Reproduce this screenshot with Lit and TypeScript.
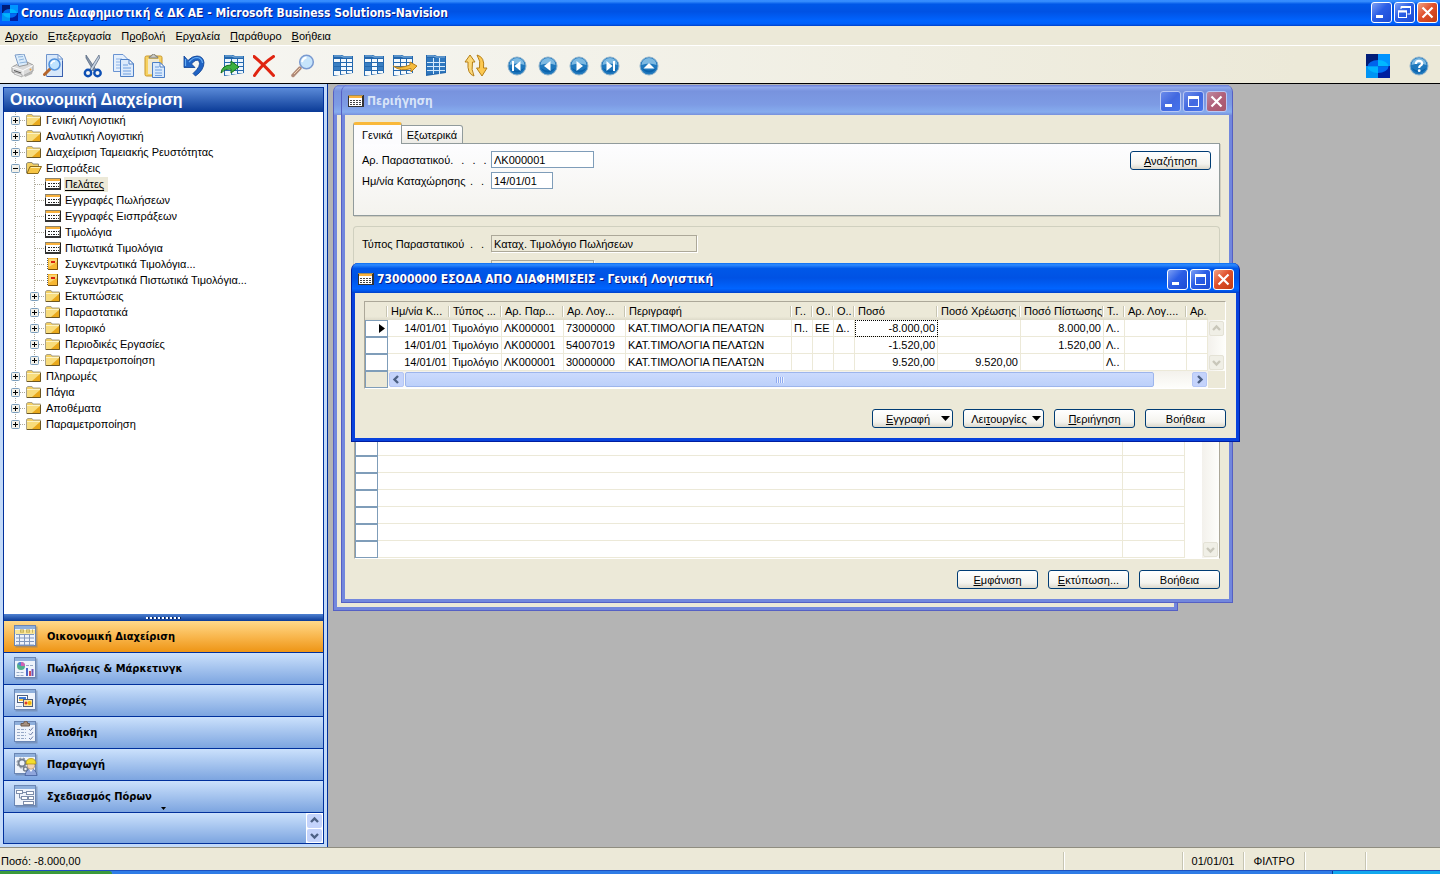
import { LitElement, html, svg, css, nothing, TemplateResult } from "lit";
import { customElement, property } from "lit/decorators.js";
import { classMap } from "lit/directives/class-map.js";

/* ---------- icons ---------- */

const icon = (w: number, h: number, body: unknown) =>
  html`<svg width=${w} height=${h} viewBox="0 0 ${w} ${h}" aria-hidden="true">${body}</svg>`;

const logo = (size: number) => html`
  <svg width=${size} height=${size} viewBox="0 0 24 24" aria-hidden="true">
    <rect width="12" height="12" fill="#001c78"/><rect x="12" width="12" height="12" fill="#0094ff"/>
    <rect y="12" width="12" height="12" fill="#0094f4"/><rect x="12" y="12" width="12" height="12" fill="#0020a0"/>
    <path d="M12 6A10.500 6.500 0 0 0 1.500 12.500H12Z" fill="#0064ec"/><path d="M12 6A10.500 6.500 0 0 1 22.500 12.500H12Z" fill="#00b8ff"/>
    <path d="M1.500 12.500A10.500 6.500 0 0 0 12 19V12.500Z" fill="#00b4ff"/><path d="M12 19A10.500 6.500 0 0 0 22.500 12.500H12Z" fill="#006cf4"/>
  </svg>`;

const folder = icon(16, 12, svg`
  <path d="M.5 11.500V1.500L2 .5H6L7 2H14.500V11.500Z" fill="#f3cf62" stroke="#a8a18a"/>
  <path d="M1 11V3H14V11Z" fill="#f8dc7c"/><path d="M1 3.500H14" stroke="#fdf3c4"/>
  <path d="M6 11L14 4V11Z" fill="#e9a91c"/><path d="M1 11.500H14.500V3" fill="none" stroke="#6b5623"/>`);

const folderOpen = icon(16, 12, svg`
  <path d="M.5 11V1.500L2 .5H6L7 2H12.500V5" fill="#f3cf62" stroke="#8d8a78"/>
  <path d="M1 11.500L4 4.500H15.500L12 11.500Z" fill="#f6c444" stroke="#8a6a1c"/>
  <path d="M5 5.500H14" stroke="#fdf0b0"/>`);

const listIcon = icon(16, 12, svg`
  <rect x=".5" y=".5" width="14" height="10" fill="#fff" stroke="#8e8b82"/>
  <rect x="0" y="0" width="16" height="1" fill="#8e8468"/><rect x="1" y="1" width="14" height="2" fill="#f9b13c"/><rect x="1" y="3" width="14" height="1" fill="#fff"/>
  <rect x="0" y="4" width="1" height="8" fill="#222"/><rect x="15" y="1" width="1" height="11" fill="#222"/><rect x="0" y="10" width="16" height="2" fill="#333"/>
  <path d="M3 5.500H14M3 8.500H14" stroke="#222" stroke-dasharray="2 1 1 1"/>`);

const report = icon(16, 12, svg`
  <rect x="3" y="0" width="10" height="12" fill="#f6b632"/><path d="M12.500 0V11.500H3" fill="none" stroke="#7a4f0c"/>
  <path d="M4 1H12V4L4 9Z" fill="#fbd672"/><rect x="6" y="3" width="4" height="2" fill="#d8230c"/>
  <path d="M2.500 0V12" stroke="#555" stroke-dasharray="1 1"/>`);

const printer = icon(24, 24, svg`
  <path d="M4 1L13 0L17 11L8 13Z" fill="#d9ebfb" stroke="#7c9cc8"/><path d="M7 3L12 2.500M8 6L13 5M8.500 9L15 8" stroke="#8fb5dd"/>
  <path d="M1 13L6 10.500L8 12.500L17 10.500L16 8L22 11V17L12 22L1 18Z" fill="#dadada" stroke="#9a9a9a"/>
  <path d="M1 13L12 16.500L22 11.500M12 16.500V22" fill="none" stroke="#fff"/><path d="M3 16.500L10 19" stroke="#5a5a5a" stroke-width="1.200"/>
  <path d="M3 18L11 20.500V23L3 20Z" fill="#eee" stroke="#9a9a9a" stroke-width=".7"/>
  <path d="M13 21L22 17L21 20L14 23Z" fill="#b5b5b5"/><circle cx="19.500" cy="15.500" r="1" fill="#e8a040"/>`);

const preview = icon(22, 24, svg`
  <path d="M3.500 .5H15L19.500 5V22.500H3.500Z" fill="#d8e8fa" stroke="#6f94cc"/><path d="M15 .5V5H19.500Z" fill="#fff" stroke="#6f94cc"/>
  <path d="M4 22.500H20M19.500 7V22" stroke="#3a5fae"/><path d="M7 15L1.500 20.500" stroke="#b5652a" stroke-width="3" stroke-linecap="round"/>
  <circle cx="11.500" cy="10.500" r="5.500" fill="#bfe4ff" stroke="#4d8fdc" stroke-width="1.500"/><path d="M8 10Q9 7 12 7" fill="none" stroke="#fff" stroke-width="1.500"/>`);

const scissors = icon(20, 24, svg`
  <path d="M3 1L12.500 15L10.500 17L3 4Z" fill="#8796a8" stroke="#4c5f7a" stroke-width=".7"/>
  <path d="M16 1L7 15L9 17L16.500 4Z" fill="#c6d2e0" stroke="#4c5f7a" stroke-width=".7"/>
  <circle cx="5" cy="19" r="3.200" fill="none" stroke="#0d4fb4" stroke-width="2.400"/><circle cx="14.500" cy="19" r="3.200" fill="none" stroke="#0d4fb4" stroke-width="2.400"/>`);

const copy = icon(22, 24, svg`
  <path d="M.5 .5H10L14.500 5V17.500H.5Z" fill="#e4effc" stroke="#6a94d2"/><path d="M3 5H9M3 8H11M3 11H11M3 14H11" stroke="#8db4e8"/>
  <path d="M7.500 5.500H16L20.500 10V22.500H7.500Z" fill="#dceafb" stroke="#4d7fc6"/><path d="M16 5.500V10H20.500Z" fill="#fff" stroke="#4d7fc6"/>
  <path d="M10 11H15M10 14H18M10 17H18M10 20H18" stroke="#6f9fe0"/>`);

const paste = icon(22, 24, svg`
  <rect x="1" y="2" width="17" height="20" rx="1.500" fill="#f7d262" stroke="#c8962a"/><rect x="4" y="5" width="11" height="15" fill="#f2ead0"/>
  <path d="M5 4Q5 2 7.500 2Q8 0 9.500 0Q11 0 11.500 2Q14 2 14 4Z" fill="#c9c9c4" stroke="#7f7d72"/>
  <path d="M8.500 8.500H16L20.500 13V23.500H8.500Z" fill="#d8e9fc" stroke="#4d7fc6"/><path d="M16 8.500V13H20.500Z" fill="#fff" stroke="#4d7fc6"/>
  <path d="M11 13H15M11 16H18M11 19H18M11 21.500H18" stroke="#6f9fe0"/>`);

const undo = icon(22, 22, svg`
  <path d="M1 1V12.500H12L8.500 9Q13 3.500 16 6Q18.500 11 10 18.500L12.500 21Q21 15 21 7.500Q20 1 14 1Q9 1 5 5.500Z" fill="#1f63c4" stroke="#0a3d92" stroke-width=".8"/>
  <path d="M2.500 4V11M6 7Q10 2.500 14 2.500Q19 3 19.500 8" fill="none" stroke="#69aef2" stroke-width="1.200"/>`);

/* Spreadsheet glyph: a tilted frame with three columns of four cells. */
const sheetBase = svg`
  <path d="M0 1H9L11 2H20V19L0 22Z" fill="#2468ae"/><path d="M1 2H8L10 3H19" fill="none" stroke="#8fbce4"/>`;
const cells = (fill: (r: number, c: number) => string) =>
  [0, 1, 2, 3].map((r) => [0, 1, 2].map((c) => svg`<path d="M${1 + c * 6 + (c ? 1 : 0)} ${5 + r * 4}h${c ? 5 : 6}v${r === 3 ? 4 - c : 3}h-${c ? 5 : 6}z" fill=${fill(r, c)}/>`));

const tableInsert = icon(26, 24, svg`<g transform="translate(4 0)">${sheetBase}${cells(() => "#edf5fc")}</g>
  <path d="M1 19Q2 11 11 11V7L19 13L11 19V15Q5 14 1 19Z" fill="#3cb040" stroke="#146e1c"/>`);
const remove = icon(22, 22, svg`
  <path d="M1 1.500Q10 9 20.500 20.500M20.500 1.500Q9 9 1.500 20.500" fill="none" stroke="#e02410" stroke-width="3" stroke-linecap="round"/>`);
const magnifier = icon(24, 24, svg`
  <path d="M9 14L2 21.500" stroke="#b08a78" stroke-width="3.500" stroke-linecap="round"/><path d="M9 14L3 20" stroke="#f0d2b0"/>
  <circle cx="15.500" cy="8" r="6.800" fill="#c6e4fb" stroke="#7a9ad0" stroke-width="1.500"/><path d="M11 8Q12 4 15.500 3.500" fill="none" stroke="#fff" stroke-width="2"/>`);
const tableLeft = icon(22, 24, svg`${sheetBase}${cells((r, c) => (c === 0 && r > 0 && r < 3 ? "#3a7fc2" : "#f4f9fd"))}`);
const tableMid = icon(22, 24, svg`${sheetBase}${cells((r, c) => (r === 1 || r === 2 ? (c === 1 ? "#f4f9fd" : "#3a7fc2") : "#f4f9fd"))}`);
const tableArrow = icon(25, 24, svg`${sheetBase}${cells(() => "#f4f9fd")}
  <path d="M0 12Q6 15 17 11V8L24 12L18 18V14.500Q8 18 0 12Z" fill="#f6bc3c" stroke="#b9801a"/>`);
const tableBlue = icon(22, 24, svg`${sheetBase}<path d="M1 4H19V18L1 20Z" fill="#2f78bf"/><path d="M7.500 4V20M13.500 4V20M1 8.500H19M1 12.500H19M1 16.500H19" stroke="#d6eafb"/>`);
const refresh = icon(24, 24, svg`
  <path d="M1 8L6 1L11 8H8.500Q7 16 10 22Q3 20 4 8Z" fill="#fcd878" stroke="#b57f16"/>
  <path d="M13 1Q21 3 19.500 14H23L18 22L12.500 14H15.500Q17 7 13 1Z" fill="#fcc850" stroke="#b57f16"/>`);

const round = (glyph: unknown) => html`
  <svg width="20" height="20" viewBox="0 0 20 20" aria-hidden="true">
    <circle cx="10" cy="10" r="9" fill="#1f78bd" stroke="#8fb2cc"/>
    <path d="M2.500 9A7.500 7 0 0 1 17.500 9Q10 6 2.500 9Z" fill="#7db9e2"/><path d="M3 12A7.500 7 0 0 0 17 12Q10 17 3 12Z" fill="#0a62ab"/>${glyph}
  </svg>`;
const navFirst = round(svg`<path d="M6 5V15" stroke="#fff" stroke-width="2"/><path d="M13.500 5V15L7.500 10Z" fill="#fff"/>`);
const navPrev = round(svg`<path d="M12.500 5V15L6 10Z" fill="#fff"/>`);
const navNext = round(svg`<path d="M7.500 5V15L14 10Z" fill="#fff"/>`);
const navLast = round(svg`<path d="M14 5V15" stroke="#fff" stroke-width="2"/><path d="M6.500 5V15L12.500 10Z" fill="#fff"/>`);
const navUp = round(svg`<path d="M4.500 12.500H15.500L10 7Z" fill="#fff"/>`);
const help = round(svg`<path d="M6.800 8Q7 4.800 10 4.800Q13.200 4.800 13.200 7.500Q13 9 11 10Q10.200 10.500 10.200 12" fill="none" stroke="#fff" stroke-width="2.200"/><circle cx="10.200" cy="14.700" r="1.400" fill="#fff"/>`);

const card = svg`<rect x="1.500" y="1.500" width="22" height="21" fill="#5f708e" opacity=".45"/>
  <rect x=".5" y=".5" width="21" height="20" fill="#eef3fb" stroke="#6a86b4"/><rect x="1" y="1" width="20" height="3" fill="#8fb0dc"/>`;
const grid9 = icon(24, 23, svg`${card}<rect x="1" y="5" width="20" height="4" fill="#fbe79a"/>
  <path d="M6 6H19" stroke="#b79d3c" stroke-width="3" stroke-dasharray="4 2"/><path d="M6.500 6H19" stroke="#fff6b8" stroke-dasharray="3 3"/>
  <path d="M2 9.500H20M2 13H20M2 16.500H20M2 20H20M5.500 9V20M10.500 9V20M15.500 9V20" stroke="#8298bd"/>`);
const chart = icon(24, 23, svg`${card}<circle cx="7" cy="9" r="4" fill="#52b08c"/><path d="M7 9V5A4 4 0 0 1 11 9Z" fill="#d35fb4"/><path d="M7 9L3.500 7A4 4 0 0 1 7 5Z" fill="#4f7fd6"/>
  <path d="M12 8.500H19M2.500 15.500H10M2.500 18.500H10" stroke="#97a9c6" stroke-dasharray="3 1"/><path d="M13 19V11" stroke="#4a68c8" stroke-width="2"/><path d="M16 19V14" stroke="#d04c5c" stroke-width="2"/><path d="M18.500 19V12" stroke="#6b58b8" stroke-width="2"/>`);
const cardsIcon = icon(24, 23, svg`${card}<rect x="3.500" y="6.500" width="10" height="7" fill="#fff" stroke="#4d5f80"/><rect x="5" y="8" width="7" height="2" fill="#3c78d8"/><rect x="5" y="10" width="7" height="2" fill="#f6c63c"/>
  <rect x="9.500" y="10.500" width="9" height="7" fill="#ffe69a" stroke="#4d5f80"/><circle cx="12" cy="14" r="1.500" fill="#e0382c"/><circle cx="15.500" cy="14" r="2" fill="#f0b400"/><path d="M2 17.500H8" stroke="#97a9c6"/>`);
const checklist = icon(24, 23, svg`${card}<path d="M7 5V2.500H9.500Q10 0 12 0Q14 .5 13.500 2.500H15.500V5Z" fill="#a8917f" stroke="#6c5a4d"/>
  <path d="M3 8.500H12M3 11.500H12M3 14.500H12M3 17.500H12" stroke="#97a9c6" stroke-dasharray="3 1"/><path d="M15 8L16.500 9.500L19 6.500M15 12.500L16.500 14L19 11M15 17L16.500 18.500L19 15.500" fill="none" stroke="#6d7ea8"/>`);
const worker = icon(24, 23, svg`${card}<circle cx="8" cy="10" r="3.500" fill="none" stroke="#76808e" stroke-width="2"/><circle cx="8" cy="10" r="5" fill="none" stroke="#76808e" stroke-dasharray="2 2"/><circle cx="11.500" cy="16" r="2" fill="none" stroke="#76808e" stroke-width="1.500"/>
  <path d="M11 22.500Q12 16 17 16Q22 16 23 22.500Z" fill="#8fa6dc" stroke="#3b5798" stroke-width=".7"/><path d="M15 16L17 19L19 16Z" fill="#fff"/><circle cx="17" cy="12.500" r="3.800" fill="#f3d3b0" stroke="#8a6a50" stroke-width=".5"/><path d="M12 11Q12 5.500 17 5.500Q22 5.500 22 11Z" fill="#f4dd2c" stroke="#a98a10" stroke-width=".7"/>`);
const flowIcon = icon(24, 23, svg`${card}<rect x="2.500" y="5.500" width="6" height="3" fill="#fff" stroke="#7d8daa"/><rect x="12.500" y="6.500" width="7" height="3" fill="#fff" stroke="#7d8daa"/>
  <rect x="7.500" y="11.500" width="6" height="3" fill="#fff" stroke="#7d8daa"/><rect x="14.500" y="11.500" width="5" height="3" fill="#fff" stroke="#7d8daa"/><rect x="9.500" y="16.500" width="10" height="3" fill="#fff" stroke="#7d8daa"/><path d="M5.500 9V13H7.500M8.500 7.500H12" fill="none" stroke="#7d8daa"/>`);

const chevron = (dir: "up" | "down" | "left" | "right") => {
  const d = { up: "M2 7L5.500 3.500L9 7", down: "M2 4L5.500 7.500L9 4", left: "M7 2L3.500 5.500L7 9", right: "M4 2L7.500 5.500L4 9" }[dir];
  return icon(11, 11, svg`<path d=${d} fill="none" stroke="currentColor" stroke-width="2.400"/>`);
};

/* ---------- shared styles ---------- */

const base = css`
  * { box-sizing: border-box; }
  button, input { font: inherit; color: inherit; }
  svg { display: block; flex: none; }
  u { text-underline-offset: 1px; }
`;

/** Splits "_" before the access key and underlines the letter after it. */
const keyed = (text: string) => {
  const i = text.indexOf("_");
  return i < 0 ? text : html`<span>${text.slice(0, i)}<u>${text[i + 1]}</u>${text.slice(i + 2)}</span>`;
};

@customElement("caption-buttons")
class CaptionButtons extends LitElement {
  @property({ type: Boolean }) restore = false;
  @property({ type: Boolean }) dim = false;
  static styles = [base, css`
    :host { display: flex; }
    button { width: 21px; height: 21px; padding: 0; border: 1px solid #fff; border-radius: 3px; display: grid; place-items: center;
      background: linear-gradient(135deg, #7ea0f4, #2b5ee6 45%, #1c4bd4); }
    .close { background: linear-gradient(135deg, #f0a284, #e0502c 45%, #c23c12); }
    .dim button { border-color: #b9c8f4; background: linear-gradient(135deg, #6b8bea, #4268e0 50%, #4674ec); }
    .dim .close { background: linear-gradient(135deg, #bf8ba0, #b0607a 50%, #a8586c); }
    .bar { display: flex; gap: 2px; }
  `];
  render() {
    const max = this.restore
      ? svg`<path d="M6 6V3.500H15.500V11H12.500" fill="none" stroke="#fff"/><path d="M6 4H16" stroke="#fff" stroke-width="2"/><rect x="3.500" y="8" width="8" height="6.500" fill="none" stroke="#fff"/><path d="M3 8.500H12" stroke="#fff" stroke-width="2"/>`
      : svg`<rect x="4.500" y="4.500" width="10" height="10" fill="none" stroke="#fff"/><path d="M4 5.500H15" stroke="#fff" stroke-width="3"/>`;
    return html`<div class=${classMap({ bar: true, dim: this.dim })}>
      <button aria-label="Ελαχιστοποίηση">${icon(19, 19, svg`<rect x="4" y="12" width="7" height="3" fill="#fff"/>`)}</button>
      <button aria-label="Μεγιστοποίηση">${icon(19, 19, max)}</button>
      <button class="close" aria-label="Κλείσιμο">${icon(19, 19, svg`<path d="M4.500 4.500L14.500 14.500M14.500 4.500L4.500 14.500" stroke="#fff" stroke-width="2.200"/>`)}</button>
    </div>`;
  }
}

@customElement("push-button")
class PushButton extends LitElement {
  @property() label = "";
  @property({ type: Boolean }) menu = false;
  static styles = [base, css`
    :host { display: block; }
    button { width: 81px; height: 19px; padding: 0 3px; display: flex; align-items: center; justify-content: center;
      border: 1px solid #003c74; border-radius: 3px; background: linear-gradient(#fff, #f4f3ee 70%, #dcd8cc); }
    .menu { justify-content: space-between; padding: 0 2px; }
    .menu span { flex: 1; text-align: center; white-space: nowrap; }
  `];
  render() {
    return html`<button class=${classMap({ menu: this.menu })}>${keyed(this.label)}${
      this.menu ? icon(9, 5, svg`<path d="M0 0H9L4.500 5Z" fill="#000"/>`) : nothing}</button>`;
  }
}

@customElement("mdi-window")
class MdiWindow extends LitElement {
  @property() heading = "";
  @property({ type: Boolean, reflect: true }) active = false;
  static styles = [base, css`
    :host { display: flex; flex-direction: column; border-radius: 7px 7px 0 0; overflow: hidden; background: #7287dd;
      border: 1px solid #5560c4; border-top: 0; padding: 0 3px 3px; }
    :host([active]) { background: #0842dc; border-color: #001ea0; }
    header { height: 30px; margin: 0 -4px; padding: 2px 6px 0 7px; display: flex; align-items: center; flex: none;
      background: linear-gradient(#6c7fd8, #90a8ec 8%, #7893de 20%, #7d9be4 65%, #86acee 90%, #7790dc); }
    :host([active]) header { background: linear-gradient(#0a6cf0, #2f8bff 6%, #0058e8 18%, #0052e4 50%, #0064ff 85%, #0058ee 92%, #0040c8); }
    h2 { flex: 1; margin: 0 0 0 3px; font: bold 12px/16px "DejaVu Sans Condensed", "DejaVu Sans", sans-serif; color: #d8e4f8; white-space: nowrap; }
    :host([active]) h2 { color: #fff; text-shadow: 1px 1px #0a1883; }
    .client { flex: 1; background: #ece9d8; display: flex; flex-direction: column; }
  `];
  render() {
    return html`<header>
        ${this.heading ? html`${icon(16, 12, svg`<rect width="16" height="12" fill="#333"/><rect x="1" y="3" width="13" height="8" fill="#fff"/><rect x="0" y="0" width="15" height="1" fill="#a08a58"/><rect x="1" y="1" width="13" height="2" fill="#f9b13c"/>
        <path d="M2 5.500H13M2 7.500H13M2 9.500H13" stroke="#444" stroke-dasharray="2 1"/>`)}
        <h2>${this.heading}</h2><caption-buttons ?dim=${!this.active}></caption-buttons>` : nothing}
      </header><div class="client"><slot></slot></div>`;
  }
}

/* ---------- navigation pane ---------- */

type Kind = "folder" | "open" | "list" | "report";
interface Node { text: string; level: 0 | 1; kind: Kind; selected?: boolean; last?: boolean }

const TREE: Node[] = [
  { text: "Γενική Λογιστική", level: 0, kind: "folder" },
  { text: "Αναλυτική Λογιστική", level: 0, kind: "folder" },
  { text: "Διαχείριση Ταμειακής Ρευστότητας", level: 0, kind: "folder" },
  { text: "Εισπράξεις", level: 0, kind: "open" },
  { text: "Πελάτες", level: 1, kind: "list", selected: true },
  { text: "Εγγραφές Πωλήσεων", level: 1, kind: "list" },
  { text: "Εγγραφές Εισπράξεων", level: 1, kind: "list" },
  { text: "Τιμολόγια", level: 1, kind: "list" },
  { text: "Πιστωτικά Τιμολόγια", level: 1, kind: "list" },
  { text: "Συγκεντρωτικά Τιμολόγια...", level: 1, kind: "report" },
  { text: "Συγκεντρωτικά Πιστωτικά Τιμολόγια...", level: 1, kind: "report" },
  { text: "Εκτυπώσεις", level: 1, kind: "folder" },
  { text: "Παραστατικά", level: 1, kind: "folder" },
  { text: "Ιστορικό", level: 1, kind: "folder" },
  { text: "Περιοδικές Εργασίες", level: 1, kind: "folder" },
  { text: "Παραμετροποίηση", level: 1, kind: "folder", last: true },
  { text: "Πληρωμές", level: 0, kind: "folder" },
  { text: "Πάγια", level: 0, kind: "folder" },
  { text: "Αποθέματα", level: 0, kind: "folder" },
  { text: "Παραμετροποίηση", level: 0, kind: "folder", last: true },
];
const KIND_ICON: Record<Kind, TemplateResult> = { folder, open: folderOpen, list: listIcon, report };

const AREAS: [string, TemplateResult][] = [
  ["Οικονομική Διαχείριση", grid9],
  ["Πωλήσεις & Μάρκετινγκ", chart],
  ["Αγορές", cardsIcon],
  ["Αποθήκη", checklist],
  ["Παραγωγή", worker],
  ["Σχεδιασμός Πόρων", flowIcon],
];

@customElement("nav-pane")
class NavPane extends LitElement {
  static styles = [base, css`
    :host { display: flex; width: 328px; flex: none; padding: 3px; background: #c3daf9; border-right: 1px solid #00309c; }
    .box { flex: 1; min-width: 0; display: flex; flex-direction: column; border: 1px solid #00309c; background: #fff; }
    h1 { margin: 0; height: 24px; padding-left: 6px; font: bold 16px/23px "Liberation Sans", Arial, sans-serif; color: #fff;
      background: linear-gradient(#5a8ad8, #0a3a96); }
    ul { list-style: none; margin: 0; padding: 0 0 0 3px; flex: 1; min-height: 0; }
    li { height: 16px; display: flex; align-items: center; }
    .cell { width: 19px; height: 16px; flex: none; display: grid; place-items: center;
      background: repeating-linear-gradient(#aca899 0 1px, transparent 1px 2px) 8px 0 / 1px 100% no-repeat; }
    .branch { background:
      repeating-linear-gradient(#aca899 0 1px, transparent 1px 2px) 8px 0 / 1px 100% no-repeat,
      repeating-linear-gradient(90deg, #aca899 0 1px, transparent 1px 2px) 9px 8px / 10px 1px no-repeat; }
    .end { background-size: 1px 8px, 10px 1px; }
    .cell svg { margin-right: 2px; }
    a { margin-left: 3px; padding: 0 4px 0 1px; line-height: 15px; color: #000; text-decoration: none; white-space: nowrap; }
    .selected { background: #ece9d8; text-decoration: underline; text-underline-offset: 2px; }
    .splitter { height: 7px; display: grid; place-items: center; background: linear-gradient(#4f82d2, #0a3a96); }
    .splitter i { width: 36px; height: 2px; background: repeating-linear-gradient(90deg, #fff 0 2px, #10214e 2px 3px, transparent 3px 4px); }
    .area { height: 32px; width: 100%; padding: 0 0 0 10px; display: flex; align-items: center; gap: 9px; text-align: left;
      border: 0; border-bottom: 1px solid #00309c; background: linear-gradient(#cbe1fc, #7da5e0);
      font: bold 11px/16px "DejaVu Sans Condensed", "DejaVu Sans", sans-serif; }
    .current { background: linear-gradient(#ffd98a, #f9b74e 50%, #ee9515); }
    .foot { position: relative; height: 30px; display: flex; justify-content: flex-end; background: linear-gradient(#cbe1fc, #7da5e0); }
    .more { position: absolute; left: 157px; top: -6px; }
    .spin { width: 17px; display: flex; flex-direction: column; background: #fff; padding: 1px; gap: 1px; color: #4d6185; }
    .spin button { flex: 1; padding: 0; border: 0; border-radius: 2px; background: #c4d3fb; display: grid; place-items: center; color: inherit; }
  `];
  private box(open: boolean) {
    return icon(9, 9, svg`<rect x=".5" y=".5" width="8" height="8" rx="1" fill="#f3f1ea" stroke="#7b9ebd"/><path d=${open ? "M2 4.500H7" : "M2 4.500H7M4.500 2V7"} stroke="#000"/>`);
  }
  private row(n: Node) {
    const sign = n.kind === "folder" || n.kind === "open" ? this.box(n.kind === "open") : nothing;
    return html`<li>
      ${n.level ? html`<span class="cell"></span>` : nothing}
      <span class=${classMap({ cell: true, branch: true, end: !!n.last })}>${sign}</span>
      ${KIND_ICON[n.kind]}<a href="#" class=${classMap({ selected: !!n.selected })}>${n.text}</a></li>`;
  }
  render() {
    return html`<div class="box">
      <h1>Οικονομική Διαχείριση</h1>
      <ul>${TREE.map((n) => this.row(n))}</ul>
      <div class="splitter"><i></i></div>
      ${AREAS.map(([t, i], k) => html`<button class=${classMap({ area: true, current: k === 0 })}>${i}<span>${t}</span></button>`)}
      <div class="foot">
        <span class="more">${icon(5, 3, svg`<path d="M0 0H5L2.500 3Z" fill="#000"/>`)}</span>
        <div class="spin"><button aria-label="Πάνω">${chevron("up")}</button><button aria-label="Κάτω">${chevron("down")}</button></div>
      </div>
    </div>`;
  }
}

/* ---------- documents ---------- */

const leader = (n: number) => html`<span class="dots">${Array.from({ length: n }, () => html`<i>.</i>`)}</span>`;

@customElement("navigate-form")
class NavigateForm extends LitElement {
  static styles = [base, css`
    :host { display: flex; flex-direction: column; padding: 7px 9px 10px 8px; }
    .tabs { display: flex; align-items: flex-end; height: 22px; margin-bottom: -1px; position: relative; }
    .tab { height: 19px; padding: 0 5px; border: 1px solid #919b9c; border-left: 0; border-radius: 0 3px 0 0; background: linear-gradient(#fff, #ecebe6); }
    .tab.on { height: 22px; padding: 0 8px; border: 1px solid #919b9c; border-top: 3px solid #f9b83a; border-bottom: 0; border-radius: 3px 3px 0 0; background: #fcfcfe; }
    .panel { height: 73px; padding: 7px 8px; display: flex; justify-content: space-between; border: 1px solid #919b9c; background: linear-gradient(#fdfdff, #f4f3ee); box-shadow: 1px 1px #d0cdbf; }
    .fields { display: flex; flex-direction: column; gap: 4px; }
    .field { display: flex; align-items: center; height: 17px; }
    label { width: 129px; padding-right: 7px; display: flex; justify-content: space-between; white-space: nowrap; }
    .dots { display: flex; gap: 8px; }
    i { font-style: normal; }
    input { height: 17px; padding: 0 2px; border: 1px solid #7f9db9; background: #fff; outline: 0; border-radius: 0; }
    input[readonly] { border-color: #aca899; background: #ece9d8; box-shadow: 1px 1px #fff; }
    .short { width: 62px; }
    .mid { width: 103px; }
    .long { width: 206px; }
    .blank { padding-left: 129px; }
    .group { margin-top: 10px; padding: 8px 8px 43px; gap: 8px; border: 1px solid #d0d0bf; border-bottom: 0; border-radius: 4px 4px 0 0; display: flex; flex-direction: column; }
    .grid { display: flex; margin-left: 1px; border-left: 1px solid #aca899; border-right: 1px solid #aca899; border-bottom: 1px solid #fff; background: #fff; }
    table { flex: 1; border-collapse: separate; border-spacing: 0; table-layout: fixed; }
    td { height: 17px; padding: 0; border-bottom: 1px solid #ece9d8; border-right: 1px solid #ece9d8; }
    td:first-child { border: 1px solid #7f9db9; }
    .sel { width: 23px; }
    .col { width: 62px; }
    .scroll { width: 17px; margin-left: 17px; padding: 1px; display: flex; flex-direction: column; justify-content: flex-end; background: linear-gradient(90deg, #f3f1ec, #fefefb); color: #c9c7ba; }
    .scroll button { height: 15px; width: 15px; padding: 0; display: grid; place-items: center; color: inherit; border: 1px solid #e4e2d6; border-radius: 2px; background: #f0efe6; }
    .actions { display: flex; justify-content: flex-end; gap: 10px; margin-top: 11px; }
  `];
  render() {
    return html`
      <div class="tabs"><button class="tab on">Γενικά</button><button class="tab">Εξωτερικά</button></div>
      <div class="panel">
        <div class="fields">
          <div class="field"><label for="doc">Αρ. Παραστατικού${leader(4)}</label><input id="doc" class="mid" .value=${"ΛΚ000001"}></div>
          <div class="field"><label for="date">Ημ/νία Καταχώρησης${leader(2)}</label><input id="date" class="short" .value=${"14/01/01"}></div>
        </div>
        <push-button label="_Αναζήτηση"></push-button>
      </div>
      <div class="group">
        <div class="field"><label for="type">Τύπος Παραστατικού${leader(2)}</label><input id="type" class="long" readonly .value=${"Καταχ. Τιμολόγιο Πωλήσεων"}></div>
        <div class="field blank"><input class="mid" readonly aria-label="Τύπος Πηγής"></div>
      </div>
      <div class="grid">
        <table aria-label="Εγγραφές"><colgroup><col class="sel"><col><col class="col"></colgroup>
          <tbody>${Array.from({ length: 14 }, () => html`<tr><td></td><td></td><td></td></tr>`)}</tbody></table>
        <div class="scroll"><button aria-label="Κάτω">${chevron("down")}</button></div>
      </div>
      <div class="actions">
        <push-button label="_Εμφάνιση"></push-button><push-button label="_Εκτύπωση..."></push-button><push-button label="Βοήθεια"></push-button>
      </div>`;
  }
}

const COLUMNS: [string, number][] = [
  ["Ημ/νία Κ...", 62], ["Τύπος ...", 52], ["Αρ. Παρ...", 62], ["Αρ. Λογ...", 62], ["Περιγραφή", 166], ["Γ..", 21], ["Ο..", 21], ["Ο..", 21],
  ["Ποσό", 83], ["Ποσό Χρέωσης", 83], ["Ποσό Πίστωσης", 83], ["Τ..", 21], ["Αρ. Λογ....", 62], ["Αρ.", 21],
];
const ENTRIES = [
  ["14/01/01", "Τιμολόγιο", "ΛΚ000001", "73000000", "ΚΑΤ.ΤΙΜΟΛΟΓΙΑ ΠΕΛΑΤΩΝ", "Π..", "ΕΕ", "Δ..", "-8.000,00", "", "8.000,00", "Λ..", "", ""],
  ["14/01/01", "Τιμολόγιο", "ΛΚ000001", "54007019", "ΚΑΤ.ΤΙΜΟΛΟΓΙΑ ΠΕΛΑΤΩΝ", "", "", "", "-1.520,00", "", "1.520,00", "Λ..", "", ""],
  ["14/01/01", "Τιμολόγιο", "ΛΚ000001", "30000000", "ΚΑΤ.ΤΙΜΟΛΟΓΙΑ ΠΕΛΑΤΩΝ", "", "", "", "9.520,00", "9.520,00", "", "Λ..", "", ""],
];
const RIGHT = new Set([0, 8, 9, 10]);

@customElement("ledger-entries")
class LedgerEntries extends LitElement {
  static styles = [base, css`
    :host { display: flex; flex-direction: column; padding: 8px 10px 10px 9px; }
    .grid { border: 1px solid #aca899; border-right-color: #fff; border-bottom-color: #fff; }
    .top { display: flex; }
    table { flex: 1; border-collapse: separate; border-spacing: 0; table-layout: fixed; line-height: 15px; }
    th { height: 18px; padding: 1px 0 0 3px; font-weight: normal; text-align: left; white-space: nowrap; background: linear-gradient(#ece9d8 80%, #dedbca); position: relative; }
    th::after { content: ""; position: absolute; right: 0; top: 4px; height: 11px; width: 2px; background: linear-gradient(90deg, #c7c5b2 50%, #fff 50%); }
    th:last-child::after { display: none; }
    td { height: 17px; padding: 1px 2px 0; white-space: nowrap; background: #fff; border-bottom: 1px solid #ece9d8; border-right: 1px solid #ece9d8; }
    td:first-child { border: 1px solid #7f9db9; padding: 0; }
    td:first-child svg { margin-left: 13px; }
    .right { text-align: right; }
    .focus { outline: 1px dotted #000; outline-offset: -1px; }
    .sel { width: 23px; }
    .vscroll { width: 17px; margin-top: 18px; padding: 1px; display: flex; flex-direction: column; justify-content: space-between; background: linear-gradient(90deg, #f3f1ec, #fefefb); color: #c9c7ba; }
    .vscroll button, .hscroll button { width: 15px; height: 15px; padding: 0; flex: none; display: grid; place-items: center; border: 1px solid #e4e2d6; border-radius: 2px; background: #f0efe6; color: inherit; }
    .bottom { display: flex; height: 17px; }
    .stub { width: 23px; border: 1px solid #7f9db9; }
    .hscroll { flex: 1; display: flex; align-items: center; padding: 1px; background: linear-gradient(#f3f1ec, #fefefb); color: #4d6185; }
    .hscroll button { border-color: #b4c6f5; background: #c4d3fb; }
    .track { flex: 1; display: flex; padding: 0 38px 0 1px; }
    .thumb { flex: 1; height: 15px; display: grid; place-items: center; border: 1px solid #9db5ec; border-radius: 2px; background: linear-gradient(#cbdafd, #bcd0fa); }
    .thumb i { width: 8px; height: 6px; background: repeating-linear-gradient(90deg, #8faaf0 0 1px, #eaf1ff 1px 2px); }
    .corner { width: 17px; }
    .actions { display: flex; justify-content: flex-end; gap: 10px; margin-top: 20px; }
  `];
  render() {
    return html`
      <div class="grid">
        <div class="top">
          <table>
            <colgroup><col class="sel">${COLUMNS.map(([, w], i) => html`<col style=${i === 4 ? "" : `width:${w}px`}>`)}</colgroup>
            <thead><tr><th></th>${COLUMNS.map(([t]) => html`<th scope="col">${t}</th>`)}</tr></thead>
            <tbody>${ENTRIES.map((r, y) => html`<tr><td>${y === 0 ? icon(6, 9, svg`<path d="M0 0V9L6 4.500Z" fill="#000"/>`) : nothing}</td>${
              r.map((v, x) => html`<td class=${classMap({ right: RIGHT.has(x), focus: y === 0 && x === 8 })}>${v}</td>`)}</tr>`)}</tbody>
          </table>
          <div class="vscroll"><button aria-label="Πάνω">${chevron("up")}</button><button aria-label="Κάτω">${chevron("down")}</button></div>
        </div>
        <div class="bottom"><span class="stub"></span>
          <div class="hscroll"><button aria-label="Αριστερά">${chevron("left")}</button><div class="track"><div class="thumb"><i></i></div></div><button aria-label="Δεξιά">${chevron("right")}</button></div>
          <span class="corner"></span></div>
      </div>
      <div class="actions">
        <push-button label="_Εγγραφή" menu></push-button><push-button label="Λει_τουργίες" menu></push-button>
        <push-button label="_Περιήγηση"></push-button><push-button label="Βοήθεια"></push-button>
      </div>`;
  }
}

/* ---------- shell ---------- */

const MENU = ["_Αρχείο", "_Επεξεργασία", "Π_ροβολή", "Ερ_γαλεία", "_Παράθυρο", "_Βοήθεια"];
const TOOLS: { wide?: boolean; items: [string, TemplateResult][] }[] = [
  { items: [["Εκτύπωση", printer], ["Προεπισκόπηση", preview]] },
  { items: [["Αποκοπή", scissors], ["Αντιγραφή", copy], ["Επικόλληση", paste]] },
  { items: [["Αναίρεση", undo]] },
  { items: [["Εισαγωγή", tableInsert], ["Διαγραφή", remove]] },
  { items: [["Εύρεση", magnifier]] },
  { wide: true, items: [["Φίλτρο πεδίου", tableLeft], ["Φίλτρο πίνακα", tableMid], ["Φίλτρο ροής", tableArrow], ["Εμφάνιση όλων", tableBlue]] },
  { items: [["Ταξινόμηση", refresh]] },
  { wide: true, items: [["Πρώτη", navFirst], ["Προηγούμενη", navPrev], ["Επόμενη", navNext], ["Τελευταία", navLast]] },
  { items: [["Λίστα", navUp]] },
];

@customElement("app-root")
class AppRoot extends LitElement {
  static styles = [base, css`
    :host { display: flex; flex-direction: column; height: 100vh; overflow: hidden; background: #ece9d8; color: #000;
      font: 11px/14px "Liberation Sans", Arial, sans-serif; }
    .title { height: 26px; flex: none; padding: 0 2px 1px; display: flex; align-items: center; gap: 3px;
      background: linear-gradient(#2f86ff, #3c93ff 4%, #0058e8 16%, #0052e4 45%, #0064ff 80%, #0060fa 92%, #0040c8); }
    .title h1 { flex: 1; margin: 0; font: bold 12px/16px "DejaVu Sans Condensed", "DejaVu Sans", sans-serif; color: #fff; text-shadow: 1px 1px #0a1883; white-space: nowrap; }
    .menu { height: 19px; flex: none; display: flex; align-items: center; gap: 10px; padding-left: 5px; }
    .menu button { padding: 0; border: 0; background: none; }
    .tools { height: 39px; flex: none; display: flex; align-items: center; padding: 2px 6px 0 7px; border-top: 1px solid #fff; border-bottom: 1px solid #000; background: linear-gradient(90deg, #f7f7f5, #f3f2ea 40%, #ece9d8 90%); }
    .set { display: flex; margin-right: 8px; }
    .set.wide { margin-left: 2px; }
    .tools button { width: 31px; height: 30px; padding: 0; border: 0; background: none; display: grid; place-items: center; }
    .end { margin-left: auto; display: flex; align-items: center; gap: 13px; }
    .main { flex: 1; min-height: 0; display: flex; }
    .desk { flex: 1; position: relative; overflow: hidden; background: #b4b4b4; }
    mdi-window { position: absolute; }
    .back { left: 5px; top: 1px; width: 845px; height: 526px; }
    .middle { left: 13px; top: 1px; width: 892px; }
    .front { left: 23px; top: 179px; width: 889px; }
    .status { height: 23px; flex: none; display: flex; align-items: center; padding: 4px 0 0 1px; border-top: 1px solid #8f8d80; background: #ece9d8; }
    .status .msg { flex: 1; }
    .status .part { height: 18px; line-height: 18px; border-left: 1px solid #c7c5b2; box-shadow: inset 1px 0 #fff; text-align: center; }
    .w60 { width: 61px; }
    .w75 { width: 75px; }
    .w119 { width: 119px; }
    .taskbar { height: 4px; flex: none; display: flex; background: #2f7ce6; border-top: 1px solid #1c50c0; }
    .start { width: 112px; background: #3b9a3b; border-radius: 0 3px 0 0; }
    .tray { width: 108px; margin-left: auto; background: #12a8ee; border-left: 1px solid #0a3a96; }
  `];
  render() {
    return html`
      <div class="title">${logo(16)}<h1>Cronus Διαφημιστική &amp; ΔΚ ΑΕ - Microsoft Business Solutions-Navision</h1><caption-buttons restore></caption-buttons></div>
      <nav class="menu">${MENU.map((m) => html`<button>${keyed(m)}</button>`)}</nav>
      <div class="tools">
        ${TOOLS.map((g) => html`<div class=${classMap({ set: true, wide: !!g.wide })}>${g.items.map(([t, i]) => html`<button aria-label=${t}>${i}</button>`)}</div>`)}
        <div class="end">${logo(24)}<button aria-label="Βοήθεια">${help}</button></div>
      </div>
      <div class="main">
        <nav-pane></nav-pane>
        <main class="desk">
          <mdi-window class="back"></mdi-window>
          <mdi-window class="middle" heading="Περιήγηση"><navigate-form></navigate-form></mdi-window>
          <mdi-window class="front" active heading="73000000 ΕΣΟΔΑ ΑΠΟ ΔΙΑΦΗΜΙΣΕΙΣ - Γενική Λογιστική"><ledger-entries></ledger-entries></mdi-window>
        </main>
      </div>
      <footer class="status"><span class="msg">Ποσό: -8.000,00</span><span class="part w119"></span><span class="part w60">01/01/01</span><span class="part w60">ΦΙΛΤΡΟ</span><span class="part w60"></span><span class="part w75"></span></footer>
      <div class="taskbar"><span class="start"></span><span class="tray"></span></div>`;
  }
}
